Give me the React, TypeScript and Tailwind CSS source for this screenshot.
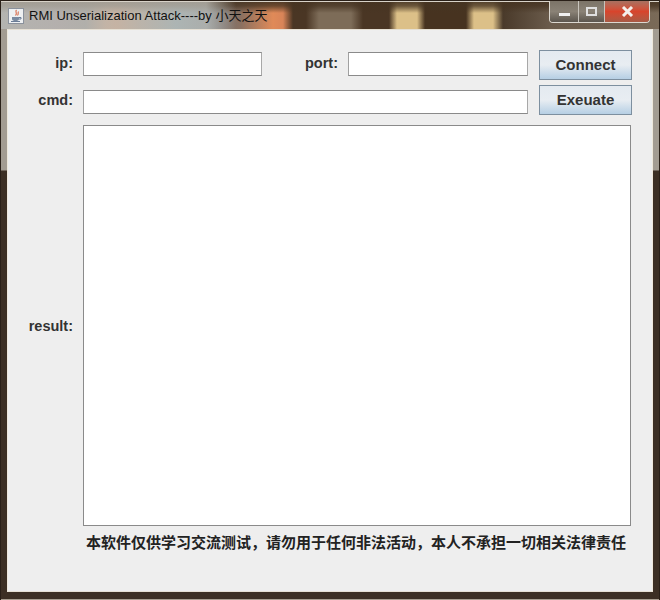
const sans = "font-['Liberation_Sans','Noto_Sans_CJK_SC',sans-serif]";

function Label({ text, className }: { text: string; className: string }) {
  return (
    <label className={`${className} text-right text-[14.5px] leading-none font-bold text-[#333333]`}>
      {text}
    </label>
  );
}

function Field({ className }: { className: string }) {
  return <div className={`${className} h-6 border border-t-[#8a8a8a] border-l-[#a0a0a0] border-r-[#a8a8a8] border-b-[#8a8a8a] bg-white`} />;
}

function JavaButton({ text, className }: { text: string; className: string }) {
  return (
    <button className={`${className} h-[30px] w-[93px] border border-[#7d8f9f] bg-gradient-to-b from-[#e4eaf0] via-[#e8edf2] to-[#b6cfe4] text-[15px] font-bold text-[#333333]`}>
      {text}
    </button>
  );
}

export default function App() {
  return (
    <div className={`${sans} relative flex h-[600px] w-[660px] flex-col overflow-hidden border-t border-l border-r border-[#2a2018] bg-[linear-gradient(180deg,#a39c92_0,#a39c92_169px,#3c2f24_170px,#3c2f24_100%)]`}>
      {/* titlebar, the blurred desktop behind the glass */}
      <div className="relative flex h-[28px] shrink-0 items-center border-t border-[#d8d2c8] bg-[linear-gradient(90deg,rgba(196,196,190,0.72)_0px,rgba(196,196,190,0.72)_205px,rgba(196,196,190,0)_235px),linear-gradient(180deg,rgba(70,52,34,0.9)_0px,rgba(70,52,34,0.75)_4px,rgba(70,52,34,0)_11px),linear-gradient(90deg,#8b8a8c_0px,#8a7a80_60px,#7f7a78_85px,#c08a68_105px,#c8865e_115px,#6f8c98_175px,#6a7880_200px,#8a7060_240px,#e08a58_272px,#d88458_282px,#4a3624_292px,#4a3624_305px,#7d6c58_318px,#7d6c58_350px,#4a3624_362px,#4a3624_388px,#dcc088_396px,#dcc088_416px,#473320_424px,#473320_465px,#dcc088_473px,#dcc088_492px,#4a3a2a_502px,#6b5c4c_550px,#7a6a58_659px)] pl-[7px]">
        <svg width="16" height="16" viewBox="0 0 16 16" className="shrink-0">
          <rect x="0.5" y="0.5" width="15" height="15" fill="#eef0f2" stroke="#8a919c" />
          <path d="M8.5 2 C6.5 4 10 5 7.5 7.5 M10.5 3.5 C9.5 5 11 5.5 9.5 7.5" fill="none" stroke="#d86a4a" strokeWidth="1.1" />
          <path d="M4 9 H11 V11 C11 12.5 9.5 13 7.5 13 C5.5 13 4 12.5 4 11 Z" fill="#7a8aa0" />
          <path d="M11 9.5 H13 V11 H11 M3 13.5 H12" fill="none" stroke="#6a7c96" />
        </svg>
        <span className="ml-[5px] text-[13px] leading-none whitespace-nowrap text-[#111111]">
          RMI Unserialization Attack----by 小天之天
        </span>
        <div className="absolute -top-px right-[9px] flex h-[22px] w-[101px] overflow-hidden rounded-b-[4px] border border-t-0 border-[#dcd8d0]">
          <div className="flex w-[29px] items-end justify-center border-r border-[#c8c4bc] bg-gradient-to-b from-[#7c7468] via-[#8a8276] to-[#5c564e] pb-[6px]">
            <div className="h-[3px] w-[11px] bg-[#f0f0f0]" />
          </div>
          <div className="flex w-[26px] items-center justify-center border-r border-[#c8c4bc] bg-gradient-to-b from-[#7c7468] via-[#8a8276] to-[#5c564e]">
            <div className="h-[9px] w-[11px] border-2 border-[#e0e0e0]" />
          </div>
          <div className="flex flex-1 items-center justify-center bg-gradient-to-b from-[#a87060] via-[#d8442c] to-[#a85a44]">
            <svg width="13" height="11" viewBox="0 0 13 11">
              <path d="M2 1 L11 10 M11 1 L2 10" stroke="#f4f0ec" strokeWidth="3" />
            </svg>
          </div>
        </div>
      </div>

      <div className="mx-[6px] flex h-[563px] shrink-0 flex-col border border-x-[#eee8dc] border-y-[#e6e0d4] bg-[#eeeeee] pt-[21px]">
        <div className="flex items-start">
          <Label text="ip:" className="mt-[5px] w-[65px]" />
          <Field className="mt-[1px] ml-[10px] w-[179px]" />
          <Label text="port:" className="mt-[5px] w-[76px]" />
          <Field className="mt-[1px] ml-[10px] w-[180px]" />
          <JavaButton text="Connect" className="-mt-[1px] ml-[11px]" />
        </div>
        <div className="flex items-start">
          <Label text="cmd:" className="mt-[13px] w-[65px]" />
          <Field className="mt-[10px] ml-[10px] w-[445px]" />
          <JavaButton text="Exeuate" className="mt-[5px] ml-[11px]" />
        </div>
        <div className="mt-[10px] flex items-center">
          <Label text="result:" className="mt-[2px] w-[65px]" />
          <div className="ml-[10px] h-[401px] w-[548px] border border-[#8a8a8a] bg-white" />
        </div>
        <p className="mt-[8px] ml-[78px] text-[15px] leading-[18px] font-bold whitespace-nowrap text-[#222222]">
          本软件仅供学习交流测试，请勿用于任何非法活动，本人不承担一切相关法律责任
        </p>
      </div>

      <div className="mt-px h-[7px] shrink-0 border-b border-[#a89e90] bg-[#3c2f24]" />
    </div>
  );
}
